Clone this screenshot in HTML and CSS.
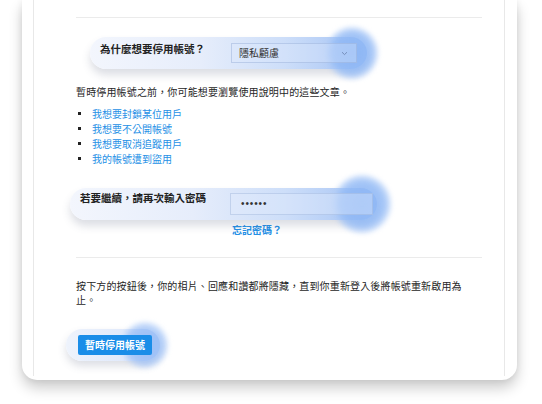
FILE: index.html
```html
<!DOCTYPE html>
<html lang="zh-Hant">
<head>
<meta charset="utf-8">
<title>停用帳號</title>
<link rel="stylesheet" href="styles.css">
</head>
<body>
<div class="stage">
  <div class="card">
    <div class="inner">
      <div class="sep sep-top"></div>

      <div class="pill pill-select">
        <span class="pill-label">為什麼想要停用帳號？</span>
        <div class="select">
          <span class="select-text">隱私顧慮</span>
          <svg class="chev" width="7" height="5" viewBox="0 0 7 5"><path d="M1 1.2 L3.5 3.6 L6 1.2" fill="none" stroke="#6f88b4" stroke-width="0.9"/></svg>
        </div>
      </div>

      <p class="text intro">暫時停用帳號之前，你可能想要瀏覽使用說明中的這些文章。</p>
      <ul class="links">
        <li><a href="#">我想要封鎖某位用戶</a></li>
        <li><a href="#">我想要不公開帳號</a></li>
        <li><a href="#">我想要取消追蹤用戶</a></li>
        <li><a href="#">我的帳號遭到盜用</a></li>
      </ul>

      <div class="pill pill-pass">
        <span class="pill-label pass-label">若要繼續，請再次輸入密碼</span>
        <div class="input"><span class="dots">••••••</span></div>
      </div>
      <div class="forgot"><a href="#">忘記密碼？</a></div>

      <div class="sep sep-mid"></div>

      <p class="text note">按下方的按鈕後，你的相片、回應和讚都將隱藏，直到你重新登入後將帳號重新啟用為止。</p>

      <div class="btn-wrap">
        <button class="btn">暫時停用帳號</button>
      </div>
    </div>
  </div>
</div>
</body>
</html>
```

FILE: styles.css
```css
html, body {
  margin: 0;
  padding: 0;
  background: #ffffff;
}
body {
  width: 542px;
  height: 404px;
  overflow: hidden;
  font-family: "Noto Sans CJK TC", "Liberation Sans", sans-serif;
  color: #262626;
}
.stage {
  width: 542px;
  height: 404px;
}
.card {
  margin-left: 22px;
  width: 495px;
  height: 380px;
  background: #ffffff;
  border-radius: 0 0 15px 15px;
  box-shadow: 0 8px 14px rgba(0, 0, 0, 0.2), 0 0 7px rgba(0, 0, 0, 0.07);
}
.inner {
  margin-left: 11px;
  width: 472px;
  height: 376px;
  box-sizing: border-box;
  border-left: 1px solid #e8e8e8;
  border-right: 1px solid #e8e8e8;
  padding: 17px 22px 0 42px;
}
.sep {
  height: 1px;
  background: #ebebeb;
}
.pill {
  position: relative;
  display: flex;
  align-items: flex-start;
  height: 32px;
  box-sizing: border-box;
  border-radius: 16px;
  background: linear-gradient(90deg, #f3f6fd 0%, #e6edfb 40%, #cddef9 70%, #a3c2f4 100%);
  box-shadow: 0 6px 9px rgba(80, 90, 120, 0.2);
}
.pill::after {
  content: "";
  position: absolute;
  border-radius: 50%;
  background: radial-gradient(circle, rgba(138, 180, 244, 0.92) 0%, rgba(145, 185, 245, 0.85) 52%, rgba(185, 210, 249, 0.45) 74%, rgba(220, 233, 253, 0) 100%);
  filter: blur(2.5px);
  pointer-events: none;
}
.pill > * {
  position: relative;
  z-index: 1;
}
.pill-label {
  font-size: 10.5px;
  font-weight: 700;
  line-height: 14px;
  color: #222;
  white-space: nowrap;
}
.pill-select {
  margin: 19px 0 0 14px;
  width: 277px;
  padding: 5px 0 0 10px;
}
.pill-select::after {
  width: 52px;
  height: 52px;
  right: -11px;
  top: -10px;
}
.pill-select .pill-label {
  width: 131px;
}
.select {
  display: flex;
  align-items: center;
  justify-content: space-between;
  width: 126px;
  height: 20px;
  box-sizing: border-box;
  margin-top: 1px;
  padding: 0 8px 0 7px;
  border: 1px solid rgba(140, 165, 210, 0.4);
  background: rgba(220, 232, 252, 0.35);
}
.select-text {
  font-size: 10px;
  color: #333;
  line-height: 14px;
}
.chev {
  display: block;
}
.text {
  margin: 0;
  font-size: 10px;
  letter-spacing: 0.15px;
  color: #262626;
}
.intro {
  margin-top: 15px;
  line-height: 15px;
}
.links {
  list-style: none;
  margin: 7px 0 0;
  padding: 0;
}
.links li {
  display: flex;
  align-items: center;
  height: 15px;
  font-size: 10px;
}
.links li::before {
  content: "";
  width: 3px;
  height: 3px;
  margin: 0 11px 0 2px;
  background: #222;
}
a {
  color: #2590e6;
  text-decoration: none;
}
.pill-pass {
  margin-top: 22px;
  margin-left: -6px;
  width: 307px;
  padding: 3px 0 0 10px;
}
.pill-pass::after {
  width: 58px;
  height: 58px;
  right: -14px;
  top: -13px;
}
.pass-label {
  width: 150px;
}
.input {
  display: flex;
  align-items: center;
  width: 143px;
  height: 22px;
  box-sizing: border-box;
  margin-top: 2px;
  padding-left: 10px;
  border: 1px solid rgba(140, 165, 210, 0.35);
  background: rgba(225, 235, 252, 0.4);
}
.dots {
  font-family: "Liberation Sans", sans-serif;
  font-size: 10px;
  letter-spacing: 0.9px;
  color: #333;
  line-height: 10px;
}
.forgot {
  margin-top: 3px;
  padding-left: 156px;
  font-size: 10px;
  font-weight: 700;
  line-height: 14px;
}
.sep-mid {
  margin-top: 20px;
}
.note {
  margin-top: 21px;
  width: 396px;
  line-height: 14px;
}
.btn-wrap {
  position: relative;
  margin: 22px 0 0 -10px;
  width: 94px;
  height: 32px;
  padding: 6px 0 0 12px;
  box-sizing: border-box;
  border-radius: 16px;
  background: linear-gradient(90deg, #eef3fc 0%, #e1eafb 60%, #b3cdf6 100%);
  box-shadow: 0 5px 9px rgba(80, 90, 120, 0.2);
}
.btn-wrap::after {
  content: "";
  position: absolute;
  width: 46px;
  height: 46px;
  right: -8px;
  top: -7px;
  border-radius: 50%;
  background: radial-gradient(circle, rgba(148, 186, 246, 0.88) 0%, rgba(155, 191, 246, 0.78) 52%, rgba(188, 212, 249, 0.4) 74%, rgba(220, 233, 253, 0) 100%);
  filter: blur(2.5px);
}
.btn {
  position: relative;
  z-index: 1;
  display: block;
  height: 20px;
  padding: 0 7px;
  border: 0;
  border-radius: 2px;
  background: #1a8de8;
  color: #fff;
  font-family: "Noto Sans CJK TC", "Liberation Sans", sans-serif;
  font-size: 10px;
  font-weight: 700;
  line-height: 20px;
  white-space: nowrap;
}
```
